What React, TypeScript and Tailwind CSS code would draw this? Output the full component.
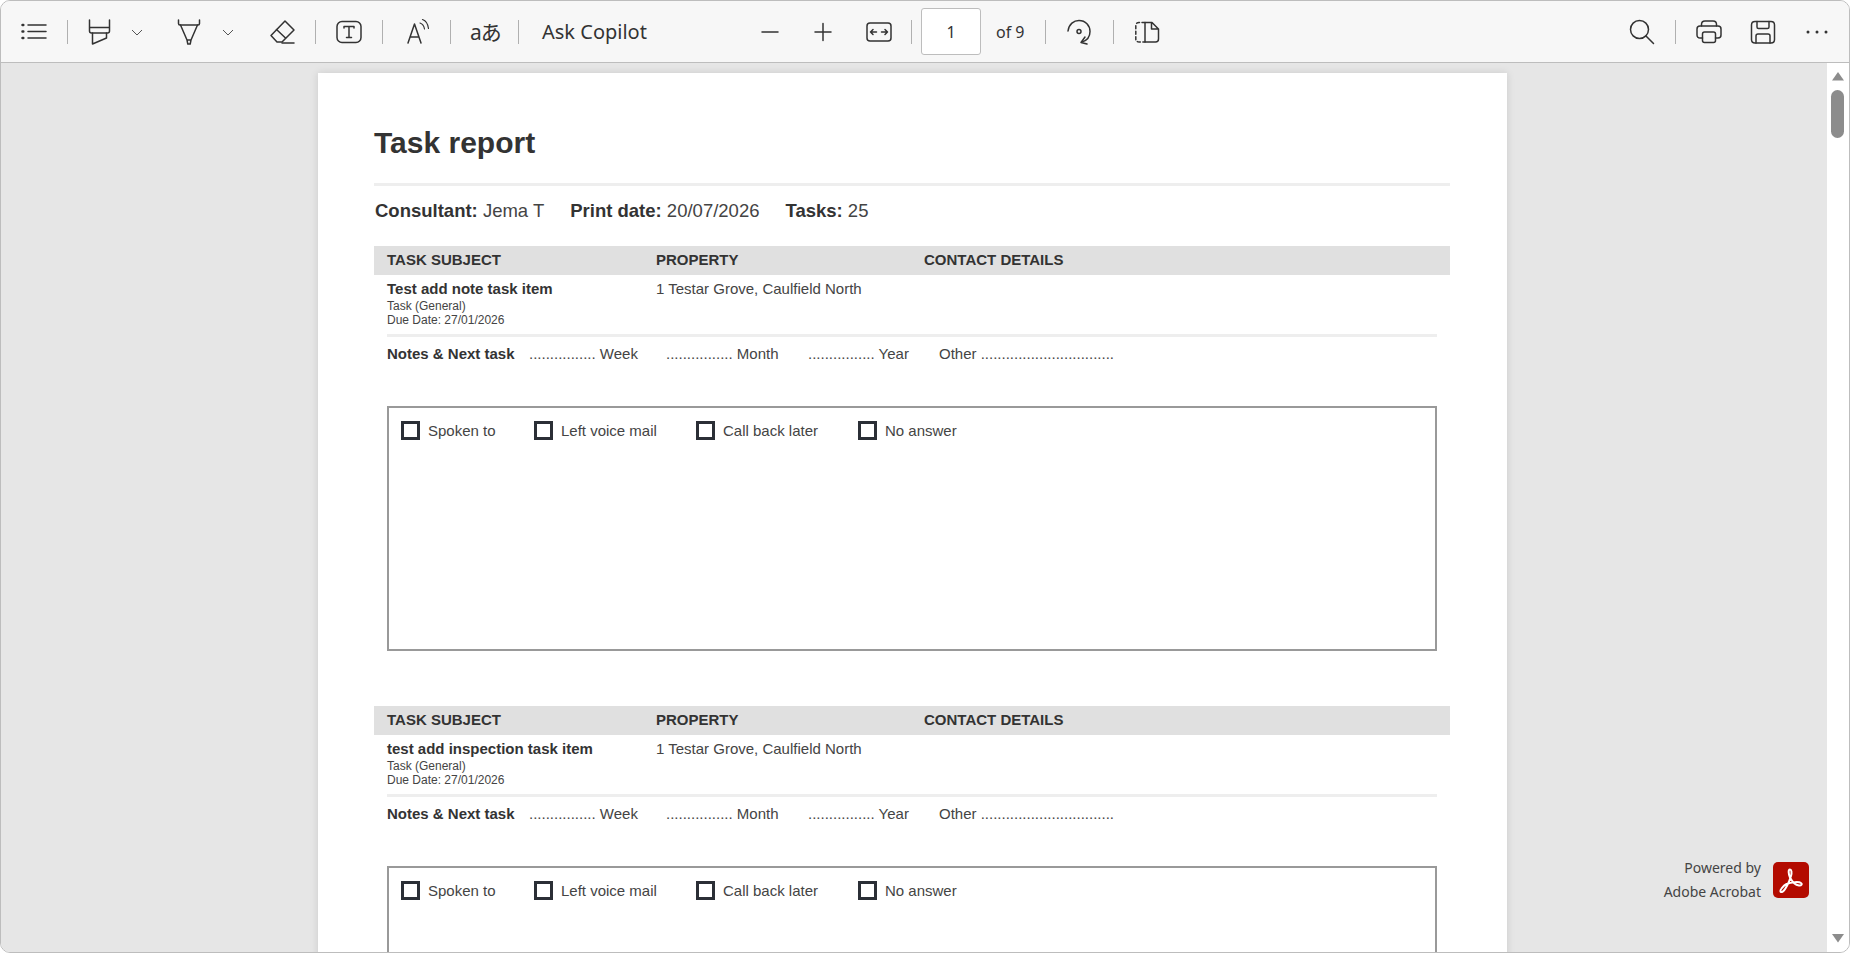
import type { ReactNode } from "react";

function Divider({ className }: { className: string }) {
  return <div className={`h-6 w-px shrink-0 bg-[#b0b0b0] ${className}`} />;
}

function Icon({ className, children }: { className: string; children: ReactNode }) {
  return (
    <svg
      viewBox="0 0 28 28"
      fill="none"
      stroke="#333"
      strokeWidth="1.5"
      strokeLinecap="round"
      strokeLinejoin="round"
      className={`h-7 w-7 shrink-0 ${className}`}
    >
      {children}
    </svg>
  );
}

function Chevron({ className }: { className: string }) {
  return (
    <svg viewBox="0 0 12 12" fill="none" stroke="#555" strokeWidth="1" className={`h-3 w-3 shrink-0 ${className}`}>
      <path d="M1 4l5 5 5-5" />
    </svg>
  );
}

function Toolbar() {
  return (
    <div className="flex h-[61px] shrink-0 items-center border-b border-[#bdbdbd] bg-[#f7f7f7] pl-[19px] pr-[18px] box-content text-[#333]">
      {/* contents list */}
      <Icon className="">
        <path d="M8 7h18M8 13.500h18M8 20h18" />
        <path d="M2.500 7h.8M2.500 13.500h.8M2.500 20h.8" strokeWidth="2.500" />
      </Icon>
      <Divider className="ml-[19px]" />
      {/* highlight */}
      <Icon className="ml-[16px]">
        <path d="M5.500 2v11c0 1.300.8 2 2 2h16c1.200 0 2-.7 2-2V2M5.500 9.500h20" />
        <path d="M8.500 15v11l14-6v-5" />
      </Icon>
      <Chevron className="ml-[19px]" />
      {/* draw */}
      <Icon className="ml-[31px]">
        <path d="M4.500 2v3.500C4.500 6.500 5 7 6 7h18c1 0 1.500-.5 1.500-1.500V2" />
        <path d="M6.500 7L13 22h4l6.500-15M13 22l.8 4h2.400l.8-4" />
      </Icon>
      <Chevron className="ml-[20px]" />
      {/* erase */}
      <Icon className="ml-[34px]">
        <path d="M17 3l9 9-12 12H9l-6-6.500z" />
        <path d="M8.500 11.500l9 8.500M14 25h12" />
      </Icon>
      <Divider className="ml-[19px]" />
      {/* add text */}
      <Icon className="ml-[19px]">
        <rect x="2" y="3.500" width="24" height="21" rx="5" />
        <path d="M9 10V8.500h10V10M14 8.500v11M11.500 19.500h5" />
      </Icon>
      <Divider className="ml-[19px]" />
      {/* read aloud */}
      <Icon className="ml-[21px]">
        <path d="M4 25l6.500-19L17 25M6.300 19h8.400" />
        <path d="M16 5c2.500.8 4 2.800 4.500 6M18.500 1.500c3.500 1.300 5.500 4.500 6 9" strokeWidth="1.200" />
      </Icon>
      <Divider className="ml-[18px]" />
      <span className="ml-[19px] w-7 shrink-0 whitespace-nowrap text-[21px] leading-7 tracking-[-1px] font-['Noto_Sans','Noto_Sans_CJK_JP',sans-serif]">
        aあ
      </span>
      <Divider className="ml-[20px]" />
      <span className="ml-[23px] w-[108px] shrink-0 whitespace-nowrap text-[20px] font-['Noto_Sans',sans-serif]">
        Ask Copilot
      </span>
      {/* zoom */}
      <Icon className="ml-[106px]">
        <path d="M6 14h16" />
      </Icon>
      <Icon className="ml-[25px]">
        <path d="M6 14h16M14 5.500v17" />
      </Icon>
      <Icon className="ml-[28px]">
        <rect x="2" y="5" width="24" height="18" rx="3" />
        <path d="M11.500 14h-6M8 11.500L5.500 14 8 16.500M16.500 14h6M20 11.500l2.500 2.500-2.500 2.500" />
      </Icon>
      <Divider className="ml-[18px]" />
      <div className="ml-[9px] flex h-[47px] w-[60px] shrink-0 items-center justify-center rounded-[3px] border border-[#bdbdbd] bg-white text-[16px] font-['Noto_Sans',sans-serif]">
        1
      </div>
      <span className="ml-[15px] w-[33px] shrink-0 whitespace-nowrap text-[16px] font-['Noto_Sans',sans-serif]">
        of 9
      </span>
      <Divider className="ml-[16px]" />
      {/* rotate */}
      <Icon className="ml-[19px]">
        <path d="M3 13C3.800 6 9 2.500 14 2.500c6.500 0 11 5 11 11 0 5-3.200 9-8 10.500" />
        <path d="M20 19l-4 5.500 6 1.500" />
        <circle cx="14" cy="13.500" r="2" />
      </Icon>
      <Divider className="ml-[20px]" />
      {/* page view */}
      <Icon className="ml-[19px]">
        <path d="M12 4.500H6c-2 0-3.200 1.200-3.200 3V21c0 1.800 1.200 3 3.200 3h6" strokeDasharray="3 2.500" />
        <path d="M12 24V4.500h7l6.500 6.500v10c0 2-1.200 3-3 3zM18.500 4.500V11h7" />
      </Icon>
      <div className="ml-auto flex items-center">
        <Icon className="">
          <circle cx="11.500" cy="11.500" r="9" />
          <path d="M18 18l7.500 7.500" />
        </Icon>
        <Divider className="ml-[19px]" />
        <Icon className="ml-[19px]">
          <path d="M6.500 8V6.500C6.500 4.500 8 3 10 3h8c2 0 3.500 1.500 3.500 3.500V8" />
          <path d="M7.500 20H5c-1.800 0-3-1.200-3-3v-6c0-1.800 1.200-3 3-3h18c1.800 0 3 1.200 3 3v6c0 1.800-1.200 3-3 3h-2.500" />
          <rect x="7.500" y="14" width="13" height="10.500" rx="2" />
        </Icon>
        <Icon className="ml-[26px]">
          <path d="M6 3.500h16c2 0 3.500 1.500 3.500 3.500v14.500c0 2-1.500 3.500-3.500 3.500H6c-2 0-3.500-1.500-3.500-3.500V7c0-2 1.500-3.500 3.500-3.500z" />
          <path d="M8 3.500V9c0 1 .7 1.500 1.500 1.500h9c.8 0 1.500-.5 1.500-1.500V3.500" />
          <path d="M7 25v-7c0-1.200.8-2 2-2h10c1.200 0 2 .8 2 2v7" />
        </Icon>
        <Icon className="ml-[26px]">
          <circle cx="5" cy="14" r="1.500" fill="#333" stroke="none" />
          <circle cx="14" cy="14" r="1.500" fill="#333" stroke="none" />
          <circle cx="23" cy="14" r="1.500" fill="#333" stroke="none" />
        </Icon>
      </div>
    </div>
  );
}

function Checkbox({ label, className }: { label: string; className: string }) {
  return (
    <div className={`flex items-center ${className}`}>
      <span className="h-[19px] w-[19px] shrink-0 border-[3px] border-[#2b2f36]" />
      <span className="ml-[8px] text-[15px] leading-[19px] text-[#444]">{label}</span>
    </div>
  );
}

function TaskBlock({ subject }: { subject: string }) {
  return (
    <div className="h-[460px] w-[1076px]">
      <div className="flex h-[29px] items-center bg-[#e0e0e0] pl-[13px] text-[15px] font-bold text-[#333]">
        <span className="w-[269px]">TASK SUBJECT</span>
        <span className="w-[268px]">PROPERTY</span>
        <span>CONTACT DETAILS</span>
      </div>
      <div className="mx-[13px] flex h-[62px] border-b-[3px] border-[#eee] pt-[4px]">
        <div className="w-[269px]">
          <div className="text-[15px] font-bold leading-[20px] text-[#333]">{subject}</div>
          <div className="text-[12px] leading-[14px] text-[#444]">Task (General)</div>
          <div className="text-[12px] leading-[14px] text-[#444]">Due Date: 27/01/2026</div>
        </div>
        <div className="text-[15px] leading-[20px] text-[#444]">1 Testar Grove, Caulfield North</div>
      </div>
      <div className="mx-[13px] mt-[8px] flex h-[61px] text-[15px] leading-[18px] text-[#444]">
        <div className="w-[142px] font-bold text-[#333]">Notes &amp; Next task</div>
        <span className="w-[137px] whitespace-nowrap">................ Week</span>
        <span className="w-[142px] whitespace-nowrap">................ Month</span>
        <span className="w-[131px] whitespace-nowrap">................ Year</span>
        <span className="whitespace-nowrap">Other ................................</span>
      </div>
      <div className="mx-[13px] flex h-[245px] items-start border-2 border-[#999] pl-[12px] pt-[13px]">
        <Checkbox label="Spoken to" className="w-[133px]" />
        <Checkbox label="Left voice mail" className="w-[162px]" />
        <Checkbox label="Call back later" className="w-[162px]" />
        <Checkbox label="No answer" className="" />
      </div>
    </div>
  );
}

function ReportPage() {
  return (
    <div className="ml-[317px] mt-[10px] w-[1189px] bg-white pl-[56px] font-['Liberation_Sans',Arial,sans-serif] shadow-[0_0_8px_rgba(0,0,0,0.12)]">
      <h1 className="pt-[48px] text-[30px] font-bold leading-[44px] text-[#333]">Task report</h1>
      <div className="mt-[18px] h-[3px] w-[1076px] bg-[#eee]" />
      <div className="mt-[13px] flex h-[24px] items-center gap-[26px] pl-px text-[18.5px] text-[#444]">
        <span>
          <b className="text-[#333]">Consultant:</b> Jema T
        </span>
        <span>
          <b className="text-[#333]">Print date:</b> 20/07/2026
        </span>
        <span>
          <b className="text-[#333]">Tasks:</b> 25
        </span>
      </div>
      <div className="mt-[23px]">
        <TaskBlock subject="Test add note task item" />
        <TaskBlock subject="test add inspection task item" />
      </div>
    </div>
  );
}

function Scrollbar() {
  return (
    <div className="flex w-[22px] shrink-0 flex-col items-center bg-white pr-[1px]">
      <svg viewBox="0 0 12 9" className="mt-[9px] h-[9px] w-3 fill-[#8c8c8c]">
        <path d="M6 0l6 8.500H0z" />
      </svg>
      <div className="mt-[9px] h-[48px] w-[13px] rounded-full bg-[#8c8c8c]" />
      <svg viewBox="0 0 12 9" className="mb-[9px] mt-auto h-[9px] w-3 fill-[#8c8c8c]">
        <path d="M0 0h12L6 8.500z" />
      </svg>
    </div>
  );
}

export default function App() {
  return (
    <div className="flex h-[953px] w-[1850px] flex-col overflow-hidden rounded-[10px] border border-[#bdbdbd] bg-[#f7f7f7]">
      <Toolbar />
      <div className="flex min-h-0 flex-1">
        <div className="relative min-w-0 flex-1 overflow-hidden bg-[#e6e6e6]">
          <ReportPage />
          {/* acrobat badge */}
          <div className="absolute bottom-[48px] right-[18px] flex items-center font-['Noto_Sans',sans-serif] text-[14px] leading-[24px] text-[#444]">
            <div className="text-right">
              <div>Powered by</div>
              <div>Adobe Acrobat</div>
            </div>
            <div className="ml-[12px] flex h-9 w-9 items-center justify-center rounded-[5px] bg-[#b30b00]">
              <svg viewBox="0 0 36 36" fill="none" stroke="#fff" strokeWidth="2" className="h-9 w-9">
                <path d="M8.500 26.500c-2 2.500-1 4 .5 3.500 3-1 7-9.500 9-16 1-3.500.5-6.500-1-6.500-2 0-1.500 4.500 0 8 2 4 5.500 7.500 9 8 2.500.3 3.500-1.500 2-2.500-2-1.500-9.500-1-14.500 1-2 .8-3.500 2.500-5 4.500z" />
              </svg>
            </div>
          </div>
        </div>
        <Scrollbar />
      </div>
    </div>
  );
}
